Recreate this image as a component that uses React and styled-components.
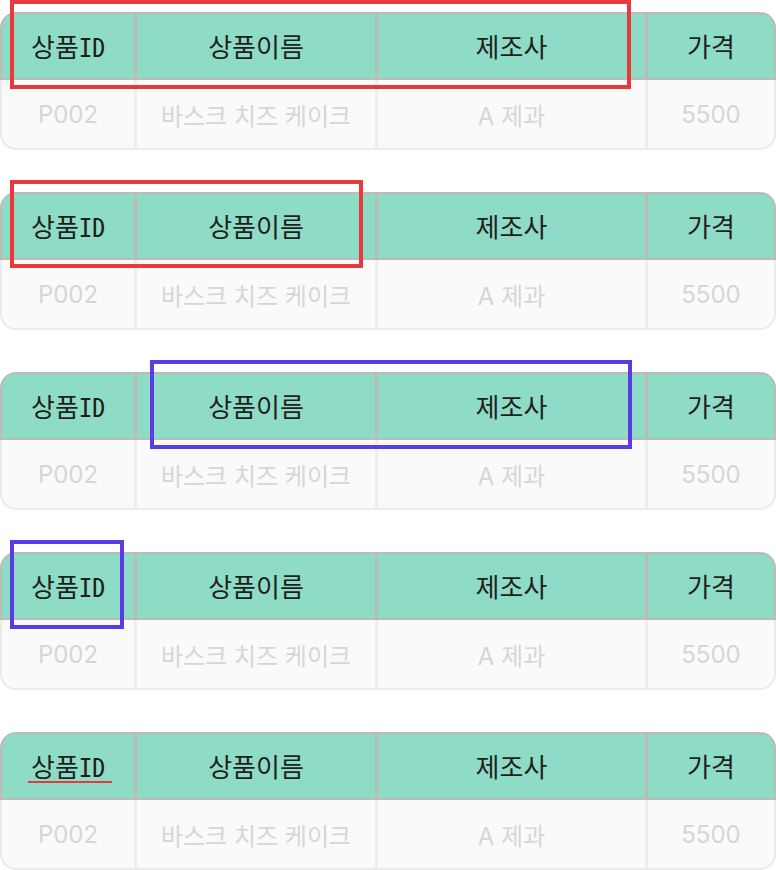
import React from "react";
import styled, { createGlobalStyle } from "styled-components";

const columns = ["상품ID", "상품이름", "제조사", "가격"];
const row = ["P002", "바스크 치즈 케이크", "A 제과", "5500"];

// overlay marks drawn over each copy of the table (offsets from the table's top-left)
const marks = [
  { kind: "box", color: "#e83a3c", top: -12, left: 10, width: 621, height: 89 },
  { kind: "box", color: "#e83a3c", top: -12, left: 10, width: 353, height: 88 },
  { kind: "box", color: "#5a3ce6", top: -12, left: 150, width: 482, height: 89 },
  { kind: "box", color: "#5a3ce6", top: -12, left: 10, width: 114, height: 89 },
  { kind: "line", color: "#e83a3c", top: 49, left: 28, width: 84, height: 2 },
];

const App = () => {
  return (
    <>
      <GlobalStyle />
      <Page>
        {marks.map((mark, i) => (
          <Section key={i}>
            <Table>
              <HeadRow>
                {columns.map((c) => (
                  <HeadCell key={c}>{c}</HeadCell>
                ))}
              </HeadRow>
              <BodyRow>
                {row.map((v) => (
                  <BodyCell key={v}>{v}</BodyCell>
                ))}
              </BodyRow>
            </Table>
            {mark.kind === "box" ? (
              <Box
                $color={mark.color}
                style={{
                  top: mark.top,
                  left: mark.left,
                  width: mark.width,
                  height: mark.height,
                }}
              />
            ) : (
              <Underline
                $color={mark.color}
                style={{ top: mark.top, left: mark.left, width: mark.width }}
              />
            )}
          </Section>
        ))}
      </Page>
    </>
  );
};

const GlobalStyle = createGlobalStyle`
  html, body {
    margin: 0;
    padding: 0;
    background: #ffffff;
  }
  * {
    box-sizing: border-box;
  }
`;

const Page = styled.div`
  width: 776px;
  padding-top: 12px;
  display: flex;
  flex-direction: column;
  gap: 42px;
`;

const Section = styled.div`
  position: relative;
`;

const Table = styled.div`
  display: flex;
  flex-direction: column;
`;

const grid = `
  display: grid;
  grid-template-columns: 135px 241px 270px 1fr;
`;

const HeadRow = styled.div`
  ${grid}
  height: 68px;
  background: #8fdcc6;
  border: 2px solid #bdbaba;
  border-radius: 16px 16px 0 0;
`;

const HeadCell = styled.div`
  display: flex;
  align-items: center;
  justify-content: center;
  padding-bottom: 2px;
  border-right: 3px solid #bdbaba;
  font-family: "Noto Sans Mono CJK KR", "DejaVu Sans Mono", "Noto Sans CJK KR",
    monospace;
  font-size: 26px;
  color: #1f1f1f;

  &:last-child {
    border-right: none;
  }
`;

const BodyRow = styled.div`
  ${grid}
  height: 70px;
  background: #fafafa;
  border: 2px solid #ebebeb;
  border-top: none;
  border-radius: 0 0 16px 16px;
`;

const BodyCell = styled.div`
  display: flex;
  align-items: center;
  justify-content: center;
  border-right: 3px solid #eeeeee;
  font-family: Inter, "Noto Sans CJK KR", sans-serif;
  font-size: 24px;
  color: #d6d6d6;

  &:last-child {
    border-right: none;
  }
`;

const Box = styled.div`
  position: absolute;
  border: 4px solid ${(p) => p.$color};
  pointer-events: none;
`;

const Underline = styled.div`
  position: absolute;
  height: 2px;
  background: ${(p) => p.$color};
`;

export default App;
